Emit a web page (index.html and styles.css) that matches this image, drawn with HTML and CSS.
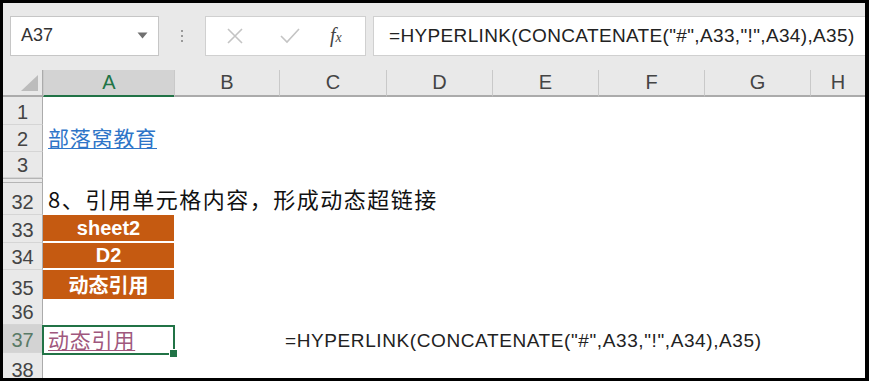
FILE: index.html
```html
<!DOCTYPE html>
<html lang="zh-CN">
<head>
    <meta charset="UTF-8">
    <title>动态超链接</title>
    <link rel="stylesheet" href="styles.css">
</head>
<body>
    <div class="frame">
        <div class="app">
            <!-- formula bar -->
            <div class="toolbar">
                <div class="namebox">
                    <span>A37</span>
                    <svg class="caret" width="11" height="7" viewBox="0 0 11 7"><path d="M0.5 0.5 L10.5 0.5 L5.5 6.5 Z" fill="#707070"/></svg>
                </div>
                <div class="grip"><i></i><i></i><i></i></div>
                <div class="fbtns">
                    <svg width="18" height="18" viewBox="0 0 18 18"><path d="M2 2 L16 16 M16 2 L2 16" stroke="#c4c4c4" stroke-width="1.6"/></svg>
                    <svg width="22" height="18" viewBox="0 0 22 18"><path d="M2 9 L8 15 L20 2" stroke="#c4c4c4" stroke-width="1.6" fill="none"/></svg>
                    <span class="fx">f<sub>x</sub></span>
                </div>
                <div class="formula">=HYPERLINK(CONCATENATE("#",A33,"!",A34),A35)</div>
            </div>

            <!-- sheet -->
            <div class="sheet">
                <div class="row head">
                    <div class="rh corner"><svg width="18" height="16" viewBox="0 0 18 16"><path d="M17 0 L17 16 L0 16 Z" fill="#bcbcbc"/></svg></div>
                    <div class="ch sel">A</div>
                    <div class="ch">B</div>
                    <div class="ch">C</div>
                    <div class="ch">D</div>
                    <div class="ch">E</div>
                    <div class="ch">F</div>
                    <div class="ch">G</div>
                    <div class="ch last">H</div>
                </div>
                <div class="row r28"><div class="rh">1</div><div class="c"></div></div>
                <div class="row r27"><div class="rh">2</div><div class="c"><a class="link">部落窝教育</a></div></div>
                <div class="row r26"><div class="rh">3</div><div class="c"></div></div>
                <div class="row hidden"><div class="rh"></div><div class="c"></div></div>
                <div class="row r32"><div class="rh">32</div><div class="c title">8、引用单元格内容，形成动态超链接</div></div>
                <div class="row r28"><div class="rh">33</div><div class="c fill">sheet2</div></div>
                <div class="row r27"><div class="rh">34</div><div class="c fill">D2</div></div>
                <div class="row r28"><div class="rh">35</div><div class="c fill">动态引用</div></div>
                <div class="row r27"><div class="rh">36</div><div class="c"></div></div>
                <div class="row r28 active">
                    <div class="rh">37</div>
                    <div class="c picked"><a class="link visited">动态引用</a><span class="handle"></span></div>
                    <div class="c"></div>
                    <div class="c formula-text">=HYPERLINK(CONCATENATE("#",A33,"!",A34),A35)</div>
                </div>
                <div class="row rest"><div class="rh">38</div><div class="c"></div></div>
            </div>
        </div>
    </div>
</body>
</html>
```

FILE: styles.css
```css
/* VARIABLES */

:root {
    --chrome: #e9e9e9;
    --line: #c9c9c9;
    --green: #217346;
    --orange: #c55a11;
    --label: #444;
}

/* PAGE */

html, body {
    margin: 0;
    height: 100%;
}

body {
    background: #000;
    font-family: "Liberation Sans", "Noto Sans CJK SC", sans-serif;
}

.frame {
    box-sizing: border-box;
    height: 381px;
    padding: 3px 4px 3px 3px;
}

.app {
    height: 100%;
    display: flex;
    flex-direction: column;
    background: var(--chrome);
    overflow: hidden;
}

/* TOOLBAR */

.toolbar {
    display: flex;
    align-items: center;
    height: 67px;
    padding: 11px 0 13px 7px;
    box-sizing: border-box;
}

.namebox {
    box-sizing: border-box;
    width: 149px;
    height: 40px;
    background: #fff;
    border: 1px solid #c6c6c6;
    display: flex;
    align-items: center;
    justify-content: space-between;
    padding: 0 10px 0 10px;
    font-size: 18px;
    color: #333;
}

.grip {
    width: 46px;
    display: flex;
    flex-direction: column;
    align-items: center;
    gap: 3px;
}

.grip i {
    width: 2px;
    height: 2px;
    background: #9a9a9a;
}

.fbtns {
    box-sizing: border-box;
    width: 161px;
    height: 40px;
    background: #fff;
    border: 1px solid #d0d0d0;
    display: flex;
    align-items: center;
    padding: 0 0 0 20px;
    gap: 35px;
}

.fx {
    font-family: "Liberation Serif", serif;
    font-style: italic;
    font-size: 20px;
    color: #444;
    margin-left: -6px;
}

.fx sub {
    font-size: 14px;
    vertical-align: 0;
}

.formula {
    flex: 1;
    box-sizing: border-box;
    height: 40px;
    margin-left: 7px;
    background: #fff;
    border: 1px solid #d0d0d0;
    border-right: 0;
    display: flex;
    align-items: center;
    padding-left: 15px;
    font-size: 19px;
    letter-spacing: 0.35px;
    color: #222;
    white-space: nowrap;
}

/* SHEET */

.sheet {
    flex: 1;
    background: #fff;
    overflow: hidden;
}

.row {
    display: grid;
    grid-template-columns: 40px 131px 105px 107px 106px 106px 106px 106px 1fr;
}

.r26 { height: 26px; }
.r27 { height: 27px; }
.r28 { height: 28px; }
.r32 { height: 32px; }
.rest { height: 30px; }

.head {
    height: 27px;
    background: var(--chrome);
}

.ch {
    display: flex;
    align-items: flex-end;
    justify-content: center;
    padding-bottom: 1px;
    font-size: 20px;
    color: var(--label);
    border-left: 1px solid var(--line);
    border-bottom: 2px solid #ababab;
    box-sizing: border-box;
}

.ch.sel {
    background: #d3d3d3;
    color: var(--green);
    border-bottom-color: var(--green);
}

.rh {
    background: var(--chrome);
    border-bottom: 1px solid #d5d5d5;
    border-right: 1px solid #ababab;
    box-sizing: border-box;
    display: flex;
    align-items: flex-end;
    justify-content: center;
    font-size: 20px;
    line-height: 20px;
    padding-bottom: 2px;
    color: var(--label);
}

.rh.corner {
    align-items: flex-end;
    justify-content: flex-end;
    padding: 0 3px 4px 0;
    border-bottom: 2px solid #ababab;
}

.hidden {
    height: 5px;
}

.hidden .rh {
    border-top: 1px solid #b5b5b5;
    border-bottom: 1px solid #b5b5b5;
    padding: 0;
}

.active .rh {
    background: #d3d3d3;
    color: #5a7a66;
}

/* CELLS */

.c {
    position: relative;
    display: flex;
    align-items: flex-end;
    padding: 0 0 3px 5px;
    white-space: nowrap;
    font-size: 21px;
    color: #111;
}

.link {
    font-family: "Noto Sans CJK SC", sans-serif;
    font-size: 21px;
    line-height: 24px;
    letter-spacing: 0.8px;
    color: #2e75c8;
    text-decoration: underline;
    text-decoration-thickness: 1px;
    text-underline-offset: 2px;
}

.link.visited {
    color: #a0577d;
}

.title {
    font-family: "Noto Sans CJK SC", sans-serif;
    font-size: 22px;
    line-height: 26px;
    letter-spacing: 1.5px;
    padding-bottom: 4px;
}

.fill {
    background: var(--orange);
    border-bottom: 2px solid #fff;
    color: #fff;
    font-weight: bold;
    justify-content: center;
    padding: 0;
    align-items: center;
    font-size: 20px;
}

.picked {
    border: 2px solid var(--green);
    margin: 0 -1px -2px -1px;
    padding: 0 0 2px 4px;
}

.handle {
    position: absolute;
    right: -5px;
    bottom: -5px;
    width: 7px;
    height: 7px;
    background: var(--green);
    border: 1px solid #fff;
}

.formula-text {
    grid-column: 4;
    font-size: 19px;
    letter-spacing: 0.6px;
    padding-left: 6px;
    padding-bottom: 1px;
    color: #222;
}
```
